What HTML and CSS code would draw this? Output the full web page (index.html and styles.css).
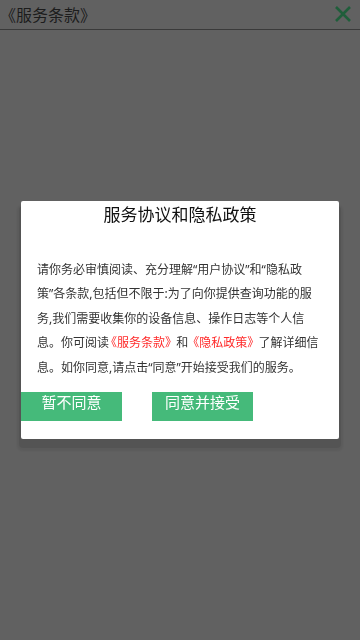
FILE: index.html
```html
<!DOCTYPE html>
<html lang="zh-CN">
<head>
    <meta charset="UTF-8">
    <meta name="viewport" content="width=device-width, initial-scale=1.0">
    <title>服务条款</title>
    <link rel="stylesheet" href="styles.css">
</head>
<body>
    <div class="header">
        <span class="header-title">《服务条款》</span>
        <svg class="close" width="18" height="18" viewBox="0 0 18 18">
            <path d="M2 2 L16 16 M16 2 L2 16" stroke="#1f5e3a" stroke-width="2.6" fill="none"/>
        </svg>
    </div>
    <div class="mask">
        <div class="dialog">
            <div class="dialog-title">服务协议和隐私政策</div>
            <p class="dialog-text">请你务必审慎阅读、充分理解“用户协议”和“隐私政<br>策”各条款,包括但不限于:为了向你提供查询功能的服<br>务,我们需要收集你的设备信息、操作日志等个人信<br>息。你可阅读<span class="link">《服务条款》</span> 和 <span class="link">《隐私政策》</span> 了解详细信<br>息。如你同意,请点击“同意”开始接受我们的服务。</p>
            <div class="btns">
                <button type="button" class="btn">暂不同意</button>
                <button type="button" class="btn">同意并接受</button>
            </div>
        </div>
    </div>
</body>
</html>
```

FILE: styles.css
```css
body{
    margin: 0;
    width: 360px;
    height: 640px;
    background-color: #616161;
    font-family: "Noto Sans", "Noto Sans CJK SC", sans-serif;
    overflow: hidden;
}
.header{
    height: 29px;
    border-bottom: 1px solid #3a3a3a;
    display: flex;
    align-items: center;
    justify-content: space-between;
    padding: 0 8px 0 0;
}
.header-title{
    font-size: 16px;
    color: #1c1c1c;
    margin-top: -2px;
}
.close{
    display: block;
    margin-top: -2px;
}
.mask{
    position: fixed;
    left: 0;
    top: 0;
    right: 0;
    bottom: 0;
    display: flex;
    align-items: center;
    justify-content: center;
}
.dialog{
    width: 318px;
    background-color: #fff;
    border-radius: 2px;
    padding-bottom: 18px;
    box-shadow: 0 8px 2px 4px rgba(0, 0, 0, 0.06), 0 7px 0 2px rgba(0, 0, 0, 0.08);
}
.dialog-title{
    text-align: center;
    font-size: 17px;
    line-height: 28px;
    color: #111;
}
.dialog-text{
    margin: 29px 0 0 0;
    padding-left: 16px;
    font-size: 12px;
    line-height: 24.5px;
    color: #333;
    white-space: nowrap;
}
.link{
    color: #ff2a2a;
    font-feature-settings: "halt";
    margin: 0 2px;
}
.btns{
    display: flex;
    gap: 30px;
    margin-top: 12px;
}
.btn{
    width: 101px;
    height: 29px;
    border: none;
    padding: 0;
    background-color: #45ba7a;
    color: #fff;
    font-family: inherit;
    font-size: 15px;
    line-height: 20px;
    display: flex;
    justify-content: center;
    align-items: flex-start;
}
```
